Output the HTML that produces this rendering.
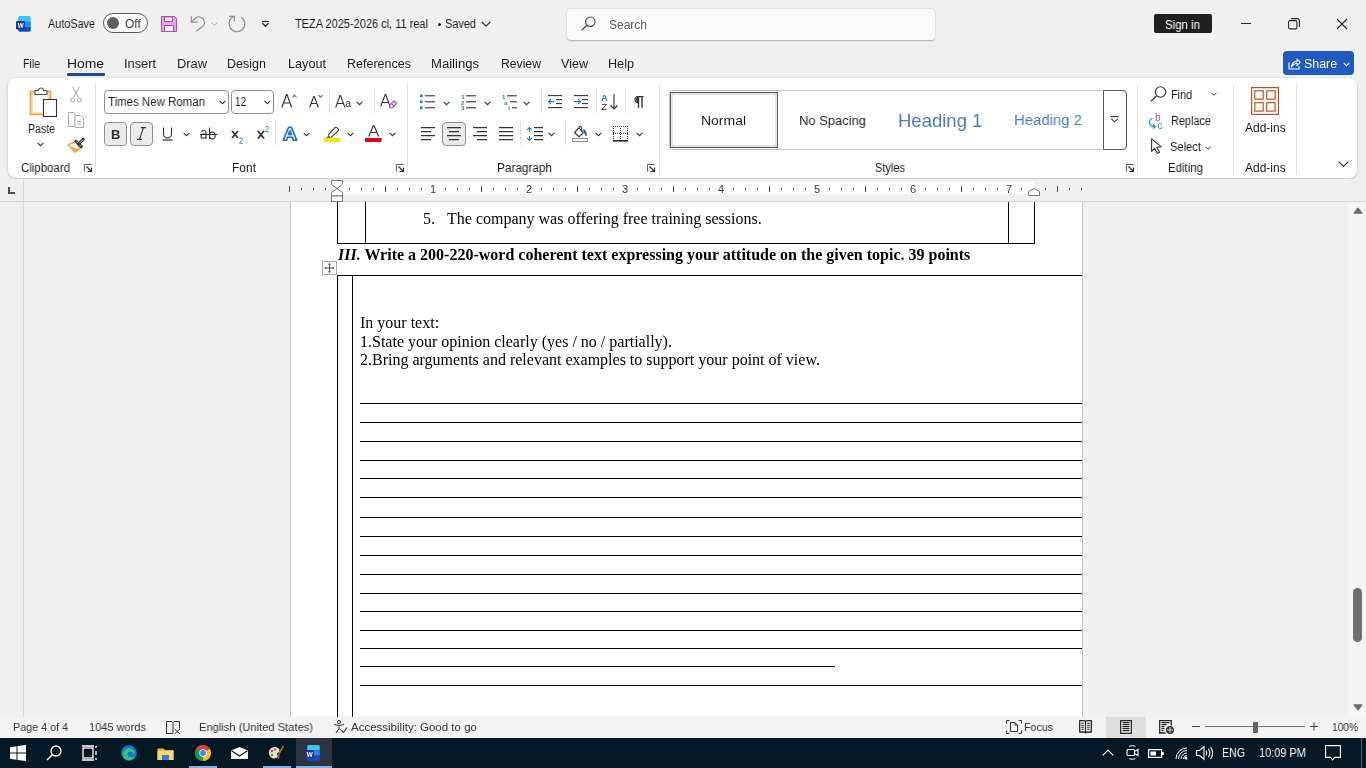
<!DOCTYPE html>
<html><head><meta charset="utf-8">
<style>
*{margin:0;padding:0;box-sizing:border-box}
html,body{width:1366px;height:768px;overflow:hidden;background:#f0f0f0;font-family:"Liberation Sans",sans-serif;color:#262626;position:relative}
.a{position:absolute;white-space:nowrap}
svg.a{overflow:visible}
body>div.a{will-change:transform}
</style></head><body>
<svg class="a" style="left:16px;top:16px" width="16" height="16" viewBox="0 0 16 16" fill="none"><defs><clipPath id="wc"><rect x="2.2" y="0.1" width="12.6" height="15.6" rx="1.6"/></clipPath></defs><g clip-path="url(#wc)"><rect x="2" y="0" width="13" height="5.3" fill="#39c6f3"/><rect x="2" y="5.3" width="13" height="5.3" fill="#1c8fe0"/><rect x="2" y="10.6" width="13" height="5.4" fill="#1251c6"/></g><rect x="0" y="5" width="8.9" height="8.6" rx="1.3" fill="#1c37a3"/><path d="M1.6 7l1.3 5h0.9l0.9-3.3 0.9 3.3h0.9L7.8 7H6.8L6.1 10.3 5.2 7h-0.8L3.5 10.3 2.8 7z" fill="#fff"/></svg>
<div class="a" style="left:48.00px;top:17.94px;font-size:12px;line-height:13.8px;font-family:'Liberation Sans',sans-serif;font-weight:400;color:#1a1a1a;transform:scaleX(0.9038);transform-origin:0 0;">AutoSave</div>
<div class="a" style="left:103px;top:13px;width:45px;height:20px;border:1px solid #5a5a5a;border-radius:10px;background:#fff"></div>
<div class="a" style="left:107px;top:17px;width:12px;height:12px;border-radius:50%;background:#5f5f5f"></div>
<div class="a" style="left:125.00px;top:17.94px;font-size:12px;line-height:13.8px;font-family:'Liberation Sans',sans-serif;font-weight:400;color:#404040;">Off</div>
<svg class="a" style="left:161px;top:16px" width="16" height="16" viewBox="0 0 16 16" fill="none"><path d="M0.5 0.5h13l2 2v13h-15z" fill="#e8a6e6" stroke="#b146c2"/><rect x="3.5" y="1" width="8" height="4.5" fill="#fff" stroke="#b146c2"/><rect x="3.5" y="9.5" width="9" height="6" fill="#fff" stroke="#b146c2"/></svg>
<svg class="a" style="left:188px;top:14px" width="20" height="20" viewBox="0 0 20 20" fill="none"><path d="M3.3 2.3V8.2H9.8" stroke="#8f8f8f" stroke-width="1.2"/><path d="M3.6 7.9L7 4.5A5.5 5.5 0 0 1 14.8 12.3L8.2 17.4" stroke="#8f8f8f" stroke-width="1.2"/></svg>
<svg class="a" style="left:211px;top:22px" width="7" height="4" viewBox="0 0 7 4" fill="none"><path d="M0.5 0.6l2.9 2.7 2.9-2.7" stroke="#a0a0a0" stroke-width="0.9"/></svg>
<svg class="a" style="left:226px;top:13px" width="20" height="22" viewBox="0 0 20 22" fill="none"><path d="M15.3 4.2A7.9 7.9 0 1 1 8.4 3.3" stroke="#8f8f8f" stroke-width="1.2"/><path d="M3.1 3.3H8.4V8.5" stroke="#8f8f8f" stroke-width="1.2"/></svg>
<svg class="a" style="left:261px;top:20px" width="9" height="8" viewBox="0 0 9 8" fill="none"><path d="M1 1.5h7" stroke="#262626" stroke-width="1.2"/><path d="M1.5 3.3l3 3 3-3" stroke="#262626" stroke-width="1.3"/></svg>
<div class="a" style="left:295.00px;top:17.94px;font-size:12px;line-height:13.8px;font-family:'Liberation Sans',sans-serif;font-weight:400;color:#1a1a1a;transform:scaleX(0.9160);transform-origin:0 0;">TEZA 2025-2026 cl, 11 real</div>
<div class="a" style="left:438px;top:23px;width:3px;height:3px;border-radius:50%;background:#262626"></div>
<div class="a" style="left:445.00px;top:17.94px;font-size:12px;line-height:13.8px;font-family:'Liberation Sans',sans-serif;font-weight:400;color:#1a1a1a;transform:scaleX(0.9118);transform-origin:0 0;">Saved</div>
<svg class="a" style="left:481px;top:21px" width="10" height="7" viewBox="0 0 10 7" fill="none"><path d="M0.7 0.9l4.3 4.3 4.3-4.3" stroke="#262626" stroke-width="1.2"/></svg>
<div class="a" style="left:567px;top:9px;width:368px;height:31px;background:#fafafa;border-radius:4px;box-shadow:0 0.5px 1.5px rgba(0,0,0,.28)"></div>
<svg class="a" style="left:581px;top:16px" width="15" height="15" viewBox="0 0 15 15" fill="none"><circle cx="9.3" cy="5.7" r="4.7" stroke="#444" stroke-width="1.2"/><path d="M6 9L0.8 14.2" stroke="#444" stroke-width="1.3"/></svg>
<div class="a" style="left:609.00px;top:18.64px;font-size:12px;line-height:13.8px;font-family:'Liberation Sans',sans-serif;font-weight:400;color:#5c5c5c;">Search</div>
<div class="a" style="left:1154px;top:14px;width:58px;height:19px;background:#202020;border-radius:2px"></div>
<div class="a" style="left:1165.00px;top:18.94px;font-size:12px;line-height:13.8px;font-family:'Liberation Sans',sans-serif;font-weight:400;color:#fff;transform:scaleX(0.9537);transform-origin:0 0;">Sign in</div>
<div class="a" style="left:1241px;top:23px;width:10px;height:1px;background:#262626"></div>
<svg class="a" style="left:1288px;top:18px" width="12" height="12" viewBox="0 0 12 12" fill="none"><rect x="0.6" y="2.6" width="8.3" height="8.3" rx="1.5" stroke="#262626" stroke-width="1.1"/><path d="M3 0.6h6.2a2.2 2.2 0 0 1 2.2 2.2V9" stroke="#262626" stroke-width="1.1"/></svg>
<svg class="a" style="left:1336px;top:18px" width="12" height="12" viewBox="0 0 12 12" fill="none"><path d="M1 1l10 10M11 1L1 11" stroke="#262626" stroke-width="1.1"/></svg>
<div class="a" style="left:23.00px;top:57.94px;font-size:12px;line-height:13.8px;font-family:'Liberation Sans',sans-serif;font-weight:400;color:#1f1f1f;transform:scaleX(0.8808);transform-origin:0 0;">File</div>
<div class="a" style="left:67.00px;top:57.94px;font-size:12px;line-height:13.8px;font-family:'Liberation Sans',sans-serif;font-weight:400;color:#1a1a1a;transform:scaleX(1.1562);transform-origin:0 0;">Home</div>
<div class="a" style="left:124.00px;top:57.94px;font-size:12px;line-height:13.8px;font-family:'Liberation Sans',sans-serif;font-weight:400;color:#1f1f1f;transform:scaleX(1.0667);transform-origin:0 0;">Insert</div>
<div class="a" style="left:177.00px;top:57.94px;font-size:12px;line-height:13.8px;font-family:'Liberation Sans',sans-serif;font-weight:400;color:#1f1f1f;transform:scaleX(1.0714);transform-origin:0 0;">Draw</div>
<div class="a" style="left:227.00px;top:57.94px;font-size:12px;line-height:13.8px;font-family:'Liberation Sans',sans-serif;font-weight:400;color:#1f1f1f;transform:scaleX(1.0428);transform-origin:0 0;">Design</div>
<div class="a" style="left:288.00px;top:57.94px;font-size:12px;line-height:13.8px;font-family:'Liberation Sans',sans-serif;font-weight:400;color:#1f1f1f;transform:scaleX(1.0556);transform-origin:0 0;">Layout</div>
<div class="a" style="left:347.00px;top:57.94px;font-size:12px;line-height:13.8px;font-family:'Liberation Sans',sans-serif;font-weight:400;color:#1f1f1f;transform:scaleX(1.0423);transform-origin:0 0;">References</div>
<div class="a" style="left:431.00px;top:57.94px;font-size:12px;line-height:13.8px;font-family:'Liberation Sans',sans-serif;font-weight:400;color:#1f1f1f;transform:scaleX(1.0909);transform-origin:0 0;">Mailings</div>
<div class="a" style="left:501.00px;top:57.94px;font-size:12px;line-height:13.8px;font-family:'Liberation Sans',sans-serif;font-weight:400;color:#1f1f1f;transform:scaleX(1.0152);transform-origin:0 0;">Review</div>
<div class="a" style="left:561.00px;top:57.94px;font-size:12px;line-height:13.8px;font-family:'Liberation Sans',sans-serif;font-weight:400;color:#1f1f1f;transform:scaleX(1.0465);transform-origin:0 0;">View</div>
<div class="a" style="left:608.00px;top:57.94px;font-size:12px;line-height:13.8px;font-family:'Liberation Sans',sans-serif;font-weight:400;color:#1f1f1f;transform:scaleX(1.0526);transform-origin:0 0;">Help</div>
<div class="a" style="left:67px;top:73px;width:38px;height:2.5px;background:#1e4b8f;border-radius:1px"></div>
<div class="a" style="left:1283px;top:51px;width:71px;height:24px;background:#1f5bc3;border-radius:4px"></div>
<svg class="a" style="left:1288px;top:57px" width="13" height="13" viewBox="0 0 13 13" fill="none"><path d="M1 5.5v6.5h10V9" stroke="#fff" stroke-width="1.1"/><path d="M3.5 10C4 6 6.5 4.5 9 4.5V2l3.2 3.3L9 8.6V6.2C6.8 6.2 5 7.5 3.5 10z" stroke="#fff" stroke-width="1.1" stroke-linejoin="round"/></svg>
<div class="a" style="left:1304.00px;top:57.94px;font-size:12px;line-height:13.8px;font-family:'Liberation Sans',sans-serif;font-weight:400;color:#fff;transform:scaleX(1.0312);transform-origin:0 0;">Share</div>
<svg class="a" style="left:1343px;top:62px" width="7" height="5" viewBox="0 0 7 5" fill="none"><path d="M0.7 0.8L3.5 3.6 6.3 0.8" stroke="#fff" stroke-width="1.1"/></svg>
<div class="a" style="left:8px;top:78px;width:1349px;height:100px;background:#fff;border-radius:8px;box-shadow:0 1px 3px rgba(0,0,0,.2),0 0 1px rgba(0,0,0,.1)"></div>
<div class="a" style="left:95px;top:84px;width:1px;height:90px;background:#e0e0e0"></div>
<div class="a" style="left:407px;top:84px;width:1px;height:90px;background:#e0e0e0"></div>
<div class="a" style="left:659px;top:84px;width:1px;height:90px;background:#e0e0e0"></div>
<div class="a" style="left:1137px;top:84px;width:1px;height:90px;background:#e0e0e0"></div>
<div class="a" style="left:1233px;top:84px;width:1px;height:90px;background:#e0e0e0"></div>
<div class="a" style="left:1296px;top:84px;width:1px;height:90px;background:#e0e0e0"></div>
<div class="a" style="left:21.00px;top:162.44px;font-size:12px;line-height:13.8px;font-family:'Liberation Sans',sans-serif;font-weight:400;color:#262626;transform:scaleX(0.9533);transform-origin:0 0;">Clipboard</div>
<div class="a" style="left:232.00px;top:162.44px;font-size:12px;line-height:13.8px;font-family:'Liberation Sans',sans-serif;font-weight:400;color:#1a1a1a;">Font</div>
<div class="a" style="left:497.00px;top:162.44px;font-size:12px;line-height:13.8px;font-family:'Liberation Sans',sans-serif;font-weight:400;color:#1a1a1a;transform:scaleX(0.9821);transform-origin:0 0;">Paragraph</div>
<div class="a" style="left:875.00px;top:162.44px;font-size:12px;line-height:13.8px;font-family:'Liberation Sans',sans-serif;font-weight:400;color:#1a1a1a;transform:scaleX(0.9174);transform-origin:0 0;">Styles</div>
<div class="a" style="left:1168.00px;top:162.44px;font-size:12px;line-height:13.8px;font-family:'Liberation Sans',sans-serif;font-weight:400;color:#1a1a1a;transform:scaleX(0.9537);transform-origin:0 0;">Editing</div>
<div class="a" style="left:1245.00px;top:162.44px;font-size:12px;line-height:13.8px;font-family:'Liberation Sans',sans-serif;font-weight:400;color:#1a1a1a;">Add-ins</div>
<svg class="a" style="left:84px;top:164px" width="9" height="9" viewBox="0 0 9 9" fill="none"><path d="M0.5 0.5h7M0.5 0.5v7" stroke="#5a5a5a" stroke-width="1"/><path d="M2.5 2.5l5 5M7.5 3.5v4h-4" stroke="#262626" stroke-width="1.1"/></svg>
<svg class="a" style="left:396px;top:164px" width="9" height="9" viewBox="0 0 9 9" fill="none"><path d="M0.5 0.5h7M0.5 0.5v7" stroke="#5a5a5a" stroke-width="1"/><path d="M2.5 2.5l5 5M7.5 3.5v4h-4" stroke="#262626" stroke-width="1.1"/></svg>
<svg class="a" style="left:647px;top:164px" width="9" height="9" viewBox="0 0 9 9" fill="none"><path d="M0.5 0.5h7M0.5 0.5v7" stroke="#5a5a5a" stroke-width="1"/><path d="M2.5 2.5l5 5M7.5 3.5v4h-4" stroke="#262626" stroke-width="1.1"/></svg>
<svg class="a" style="left:1126px;top:164px" width="9" height="9" viewBox="0 0 9 9" fill="none"><path d="M0.5 0.5h7M0.5 0.5v7" stroke="#5a5a5a" stroke-width="1"/><path d="M2.5 2.5l5 5M7.5 3.5v4h-4" stroke="#262626" stroke-width="1.1"/></svg>
<svg class="a" style="left:1338px;top:161px" width="11" height="7" viewBox="0 0 11 7" fill="none"><path d="M0.7 0.7l4.8 4.8 4.8-4.8" stroke="#333" stroke-width="1.2"/></svg>
<svg class="a" style="left:29px;top:86px" width="29" height="32" viewBox="0 0 29 32" fill="none"><path d="M1.5 5.5h4v19h8v-19h-8" fill="none"/><rect x="1.5" y="5.5" width="20" height="23" fill="#fce3b0" stroke="#e8a33a" stroke-width="1.6"/><rect x="4" y="8" width="15" height="18" fill="#fff"/><path d="M6 4.5h3.5a2.5 2.5 0 0 1 5 0H18v4H6z" fill="#fff" stroke="#555" stroke-width="1.1"/><rect x="14.5" y="13.5" width="13" height="17" fill="#fff" stroke="#333" stroke-width="1.1"/></svg>
<div class="a" style="left:28.00px;top:122.94px;font-size:12px;line-height:13.8px;font-family:'Liberation Sans',sans-serif;font-weight:400;color:#1a1a1a;transform:scaleX(0.8795);transform-origin:0 0;">Paste</div>
<svg class="a" style="left:37px;top:142px" width="7" height="5" viewBox="0 0 7 5" fill="none"><path d="M0.6 0.8L3.5 3.7 6.4 0.8" stroke="#333" stroke-width="1.1"/></svg>
<svg class="a" style="left:70px;top:86px" width="12" height="17" viewBox="0 0 12 17" fill="none"><path d="M2.5 0.5l6 11M9.5 0.5l-6 11" stroke="#a8a8a8" stroke-width="1"/><circle cx="2.6" cy="14" r="2" stroke="#a8a8a8"/><circle cx="9.4" cy="14" r="2" stroke="#a8a8a8"/></svg>
<svg class="a" style="left:68px;top:112px" width="17" height="17" viewBox="0 0 17 17" fill="none"><path d="M0.5 0.5h5l1.5 1.5v12.5h-6.5z" fill="#fff" stroke="#a8a8a8"/><path d="M7 3.5h5.5l3 3v9h-8.5z" fill="#fff" stroke="#a8a8a8"/><path d="M9 9.5h4.5M9 12h4.5" stroke="#a8a8a8"/></svg>
<svg class="a" style="left:66px;top:136px" width="20" height="18" viewBox="0 0 20 18" fill="none"><path d="M2.3 8.8L9.6 5.2 14 12.3 9.1 16.3z" fill="#fff3dc" stroke="#e8942a" stroke-width="1.1" stroke-linejoin="round"/><path d="M3.5 10.3L12.6 13.2 9.1 16.3z" fill="#f6ad45"/><path d="M9.9 5.2l5.4 5.4" stroke="#333" stroke-width="3" stroke-linecap="round"/><path d="M10.4 5.7l4.4 4.4" stroke="#e8eef3" stroke-width="1"/><path d="M13 7.6l4.3-4.3" stroke="#333" stroke-width="3" stroke-linecap="round"/><path d="M13.5 7.1l3.3-3.3" stroke="#e8eef3" stroke-width="1"/></svg>
<div class="a" style="left:104px;top:90px;width:125px;height:24px;border:1px solid #8f8f8f;border-radius:4px;background:#fff"></div>
<div class="a" style="left:108.00px;top:96.44px;font-size:12px;line-height:13.8px;font-family:'Liberation Sans',sans-serif;font-weight:400;color:#1f1f1f;transform:scaleX(0.9547);transform-origin:0 0;">Times New Roman</div>
<svg class="a" style="left:219px;top:100px" width="7" height="5" viewBox="0 0 7 5" fill="none"><path d="M0.6 0.8L3.5 3.7 6.4 0.8" stroke="#333" stroke-width="1.1"/></svg>
<div class="a" style="left:231px;top:90px;width:43px;height:24px;border:1px solid #8f8f8f;border-radius:4px;background:#fff"></div>
<div class="a" style="left:235.00px;top:96.44px;font-size:12px;line-height:13.8px;font-family:'Liberation Sans',sans-serif;font-weight:400;color:#1f1f1f;transform:scaleX(0.8271);transform-origin:0 0;">12</div>
<svg class="a" style="left:264px;top:100px" width="7" height="5" viewBox="0 0 7 5" fill="none"><path d="M0.6 0.8L3.5 3.7 6.4 0.8" stroke="#333" stroke-width="1.1"/></svg>
<svg class="a" style="left:281px;top:93px" width="16" height="15" viewBox="0 0 16 15" fill="none"><path d="M0.8 14.5L5.5 1.5h0.5L10.7 14.5M2.5 10h7" stroke="#333" stroke-width="1.2"/><path d="M11.5 4.5l2-2.3 2 2.3" stroke="#1f7ac5" stroke-width="1.1"/></svg>
<svg class="a" style="left:309px;top:94px" width="14" height="14" viewBox="0 0 14 14" fill="none"><path d="M0.7 13.5L4.7 2.5h0.6L9.3 13.5M2.2 9.5h6" stroke="#333" stroke-width="1.1"/><path d="M9.5 1.2l2 2.2 2-2.2" stroke="#1f7ac5" stroke-width="1.1"/></svg>
<div class="a" style="left:329px;top:90px;width:1px;height:23px;background:#e0e0e0"></div>
<svg class="a" style="left:335px;top:94px" width="17" height="14" viewBox="0 0 17 14" fill="none"><path d="M0.7 13.5L5 1.5h0.6L9.9 13.5M2.3 9.5h6" stroke="#333" stroke-width="1.1"/><text x="10.3" y="13.4" font-size="10.5" fill="#333" font-family="Liberation Sans">a</text></svg>
<svg class="a" style="left:356px;top:101px" width="7" height="5" viewBox="0 0 7 5" fill="none"><path d="M0.6 0.8L3.5 3.7 6.4 0.8" stroke="#333" stroke-width="1.1"/></svg>
<div class="a" style="left:374px;top:90px;width:1px;height:23px;background:#e0e0e0"></div>
<svg class="a" style="left:380px;top:93px" width="17" height="15" viewBox="0 0 17 15" fill="none"><path d="M0.7 13.5L5.2 1.5h0.6L10 13.5M2.2 9.5h6.5" stroke="#333" stroke-width="1.1"/><path d="M9.5 12.5l4.5-4.5 2.5 2.5-4.5 4.5h-2z" stroke="#a84bc8" stroke-width="1.2" stroke-linejoin="round"/><path d="M11.5 10.5l2.5 2.5" stroke="#a84bc8" stroke-width="1"/></svg>
<div class="a" style="left:104px;top:122px;width:23px;height:24px;border:1px solid #8f8f8f;border-radius:4px;background:#ebebeb"></div>
<div class="a" style="left:111.00px;top:128.02px;font-size:13px;line-height:14.95px;font-family:'Liberation Sans',sans-serif;font-weight:700;color:#333;transform:scaleX(0.9574);transform-origin:0 0;">B</div>
<div class="a" style="left:130px;top:122px;width:23px;height:24px;border:1px solid #8f8f8f;border-radius:4px;background:#ebebeb"></div>
<svg class="a" style="left:136px;top:127px" width="11" height="13" viewBox="0 0 11 13" fill="none"><path d="M5 0.6h5M1 12.4h5M7.5 0.6L3.5 12.4" stroke="#333" stroke-width="1.1"/></svg>
<svg class="a" style="left:162px;top:127px" width="11" height="14" viewBox="0 0 11 14" fill="none"><path d="M1.5 0.5v6.5a4 4 0 0 0 8 0V0.5" stroke="#333" stroke-width="1.1"/><path d="M0.5 13h10" stroke="#333" stroke-width="1.2"/></svg>
<svg class="a" style="left:183px;top:132px" width="7" height="5" viewBox="0 0 7 5" fill="none"><path d="M0.6 0.8L3.5 3.7 6.4 0.8" stroke="#333" stroke-width="1.1"/></svg>
<svg class="a" style="left:200px;top:127px" width="18" height="13" viewBox="0 0 18 13" fill="none"><path d="M1.5 4.5c1-1.5 4.5-1.5 4.5 1v6M6 8c-1-1.5-5-1.5-5 1.2 0 2.8 4 2.5 5 0.8" stroke="#333" stroke-width="1.1"/><path d="M9.5 0.5v11.5M9.7 7c0.8-2.8 5.5-2.8 5.5 1.5s-4.7 4.3-5.5 1.5" stroke="#333" stroke-width="1.1"/><path d="M0 7.5h17.5" stroke="#333" stroke-width="1.1"/></svg>
<svg class="a" style="left:231px;top:130px" width="13" height="14" viewBox="0 0 13 14" fill="none"><path d="M1 1l6 7M7 1L1 8" stroke="#333" stroke-width="1.8"/><path d="M8.5 9c0.5-1.5 3-1.5 3 0.3 0 1.2-3 2.5-3 4h3.2" stroke="#1f7ac5" stroke-width="0.9"/></svg>
<svg class="a" style="left:257px;top:126px" width="13" height="14" viewBox="0 0 13 14" fill="none"><path d="M1 5l6 7.5M7 5L1 12.5" stroke="#333" stroke-width="1.8"/><path d="M8.5 1.5c0.5-1.5 3-1.5 3 0.3 0 1.2-3 2.5-3 4h3.2" stroke="#1f7ac5" stroke-width="0.9"/></svg>
<div class="a" style="left:275px;top:122px;width:1px;height:23px;background:#e0e0e0"></div>
<svg class="a" style="left:282px;top:126px" width="16" height="16" viewBox="0 0 16 16" fill="none"><path d="M1.2 14.2L6.6 1.2h2.8l5.4 13h-3.4l-1.1-2.9H5.7l-1.1 2.9z M6.7 8.4h2.6L8 4.9z" fill="#cfe6f8" stroke="#1f6fc0" stroke-width="1.6" stroke-linejoin="round"/></svg>
<svg class="a" style="left:303px;top:132px" width="7" height="5" viewBox="0 0 7 5" fill="none"><path d="M0.6 0.8L3.5 3.7 6.4 0.8" stroke="#333" stroke-width="1.1"/></svg>
<svg class="a" style="left:323px;top:124px" width="18" height="19" viewBox="0 0 18 19" fill="none"><path d="M5.2 11l6.7-7.3a1.4 1.4 0 0 1 2 0l1.2 1.2a1.4 1.4 0 0 1 0 2L7.8 13.6" fill="#fff" stroke="#444" stroke-width="1.2" stroke-linejoin="round"/><path d="M5.2 11l2.6 2.6-1.6 0.3-1.3-1.2z" fill="#555"/><path d="M4.9 12.5l-2.3 1.5h3.5z" fill="#666"/><rect x="0.7" y="14" width="16.5" height="4" fill="#f5e900"/></svg>
<svg class="a" style="left:347px;top:132px" width="7" height="5" viewBox="0 0 7 5" fill="none"><path d="M0.6 0.8L3.5 3.7 6.4 0.8" stroke="#333" stroke-width="1.1"/></svg>
<svg class="a" style="left:365px;top:124px" width="17" height="19" viewBox="0 0 17 19" fill="none"><path d="M3.8 12.5L8.3 1.8h0.8l4.5 10.7M5.5 8.5h6.3" stroke="#333" stroke-width="1.2"/><rect x="0" y="14" width="16.5" height="4" fill="#e3001b"/></svg>
<svg class="a" style="left:389px;top:132px" width="7" height="5" viewBox="0 0 7 5" fill="none"><path d="M0.6 0.8L3.5 3.7 6.4 0.8" stroke="#333" stroke-width="1.1"/></svg>
<svg class="a" style="left:420px;top:94px" width="16" height="15" viewBox="0 0 16 15" fill="none"><rect x="0" y="0.5" width="2.6" height="2.6" fill="#1f7ac5"/><rect x="0" y="6.5" width="2.6" height="2.6" fill="#1f7ac5"/><rect x="0" y="12.5" width="2.6" height="2.6" fill="#1f7ac5"/><path d="M5 1.8h10" stroke="#333" stroke-width="1.1"/><path d="M5 7.8h10" stroke="#333" stroke-width="1.1"/><path d="M5 13.8h10" stroke="#333" stroke-width="1.1"/></svg>
<svg class="a" style="left:443px;top:101px" width="7" height="5" viewBox="0 0 7 5" fill="none"><path d="M0.6 0.8L3.5 3.7 6.4 0.8" stroke="#333" stroke-width="1.1"/></svg>
<svg class="a" style="left:461px;top:94px" width="16" height="16" viewBox="0 0 16 16" fill="none"><text x="0.3" y="5.2" font-size="6.2" font-weight="700" fill="#1f7ac5" font-family="Liberation Sans">1</text><text x="0" y="10.6" font-size="6.2" font-weight="700" fill="#1f7ac5" font-family="Liberation Sans">2</text><text x="0" y="16" font-size="6.2" font-weight="700" fill="#1f7ac5" font-family="Liberation Sans">3</text><path d="M5 1.8h10" stroke="#333" stroke-width="1.1"/><path d="M5 7.8h10" stroke="#333" stroke-width="1.1"/><path d="M5 13.8h10" stroke="#333" stroke-width="1.1"/></svg>
<svg class="a" style="left:484px;top:101px" width="7" height="5" viewBox="0 0 7 5" fill="none"><path d="M0.6 0.8L3.5 3.7 6.4 0.8" stroke="#333" stroke-width="1.1"/></svg>
<svg class="a" style="left:502px;top:94px" width="16" height="16" viewBox="0 0 16 16" fill="none"><text x="0" y="5.2" font-size="6.2" font-weight="700" fill="#1f7ac5" font-family="Liberation Sans">1</text><text x="2.2" y="10.6" font-size="6.2" font-weight="700" fill="#1f7ac5" font-family="Liberation Sans">a</text><text x="6.3" y="16" font-size="6.2" font-weight="700" fill="#1f7ac5" font-family="Liberation Sans">i</text><path d="M5 1.8h10" stroke="#333" stroke-width="1.1"/><path d="M8 7.8h7" stroke="#333" stroke-width="1.1"/><path d="M10 13.8h5" stroke="#333" stroke-width="1.1"/></svg>
<svg class="a" style="left:523px;top:101px" width="7" height="5" viewBox="0 0 7 5" fill="none"><path d="M0.6 0.8L3.5 3.7 6.4 0.8" stroke="#333" stroke-width="1.1"/></svg>
<div class="a" style="left:541px;top:90px;width:1px;height:23px;background:#e0e0e0"></div>
<svg class="a" style="left:548px;top:95px" width="15" height="14" viewBox="0 0 15 14" fill="none"><path d="M0 0.6h14" stroke="#333" stroke-width="1.1"/><path d="M0 12.6h14" stroke="#333" stroke-width="1.1"/><path d="M8 4.6h6" stroke="#333" stroke-width="1.1"/><path d="M8 8.6h6" stroke="#333" stroke-width="1.1"/><path d="M0.5 6.6h6M3 4l-2.5 2.6L3 9.2" stroke="#1f7ac5" stroke-width="1.1"/></svg>
<svg class="a" style="left:574px;top:95px" width="15" height="14" viewBox="0 0 15 14" fill="none"><path d="M0 0.6h14" stroke="#333" stroke-width="1.1"/><path d="M0 12.6h14" stroke="#333" stroke-width="1.1"/><path d="M8 4.6h6" stroke="#333" stroke-width="1.1"/><path d="M8 8.6h6" stroke="#333" stroke-width="1.1"/><path d="M0 6.6h6.5M4 4l2.5 2.6L4 9.2" stroke="#1f7ac5" stroke-width="1.1"/></svg>
<div class="a" style="left:596px;top:90px;width:1px;height:23px;background:#e0e0e0"></div>
<svg class="a" style="left:601px;top:93px" width="18" height="17" viewBox="0 0 18 17" fill="none"><text x="0" y="7.8" font-size="9.5" font-weight="700" fill="#1f7ac5" font-family="Liberation Sans">A</text><text x="0.3" y="16.7" font-size="9.5" fill="#333" font-family="Liberation Sans">Z</text><path d="M13 1v15M9.5 12.5l3.5 3.5 3.5-3.5" stroke="#333" stroke-width="1.1"/></svg>
<div class="a" style="left:625px;top:90px;width:1px;height:23px;background:#e0e0e0"></div>
<svg class="a" style="left:634px;top:96px" width="10" height="12" viewBox="0 0 10 12" fill="none"><path d="M4 6.5C0 6.5 0 0.7 4 0.7h5.5" stroke="#333" stroke-width="1.3"/><path d="M4.5 0.7v11M8 0.7v11" stroke="#333" stroke-width="1.4"/><path d="M4.5 1v5.5C1.5 6.5 1 1 4.5 1z" fill="#333"/></svg>
<svg class="a" style="left:421px;top:127px" width="15" height="14" viewBox="0 0 15 14" fill="none"><path d="M0 0.6h14M0 4.6h10M0 8.6h14M0 12.6h10" stroke="#333" stroke-width="1.1"/></svg>
<div class="a" style="left:442px;top:122px;width:24px;height:24px;border:1px solid #8f8f8f;border-radius:4px;background:#ebebeb"></div>
<svg class="a" style="left:447px;top:127px" width="15" height="14" viewBox="0 0 15 14" fill="none"><path d="M0 0.6h14M2 4.6h10M0 8.6h14M2 12.6h10" stroke="#333" stroke-width="1.1"/></svg>
<svg class="a" style="left:473px;top:127px" width="15" height="14" viewBox="0 0 15 14" fill="none"><path d="M0 0.6h14M4 4.6h10M0 8.6h14M4 12.6h10" stroke="#333" stroke-width="1.1"/></svg>
<svg class="a" style="left:499px;top:127px" width="15" height="14" viewBox="0 0 15 14" fill="none"><path d="M0 0.6h14M0 4.6h14M0 8.6h14M0 12.6h14" stroke="#333" stroke-width="1.1"/></svg>
<div class="a" style="left:520px;top:122px;width:1px;height:23px;background:#e0e0e0"></div>
<svg class="a" style="left:526px;top:126px" width="18" height="16" viewBox="0 0 18 16" fill="none"><path d="M3.5 1.5v4.5M1.2 3.8l2.3-2.3 2.3 2.3M3.5 10v4.5M1.2 12.2l2.3 2.3 2.3-2.3" stroke="#1f7ac5" stroke-width="1.1"/><path d="M8 1.6h9M8 5.6h9M8 9.6h9M8 13.6h9" stroke="#333" stroke-width="1.1"/></svg>
<svg class="a" style="left:548px;top:132px" width="7" height="5" viewBox="0 0 7 5" fill="none"><path d="M0.6 0.8L3.5 3.7 6.4 0.8" stroke="#333" stroke-width="1.1"/></svg>
<div class="a" style="left:565px;top:122px;width:1px;height:23px;background:#e0e0e0"></div>
<svg class="a" style="left:571px;top:125px" width="18" height="18" viewBox="0 0 18 18" fill="none"><path d="M3.5 7.5L8 3l4.3 4.9L8 11.75z" fill="#fff" stroke="#333" stroke-width="1.1" stroke-linejoin="round"/><path d="M8 3.5c0-3 2.4-3 2.4 0v3.2" stroke="#333" stroke-width="1.1"/><path d="M12.6 4.5c2 0.5 3 3 2.7 6.4-1-1-1.8-3-2.5-4.3z" fill="#1f5fa8" stroke="#1f5fa8" stroke-width="0.8"/><rect x="1.5" y="13.5" width="15" height="3" fill="#fff" stroke="#8a8a8a" stroke-width="1"/></svg>
<svg class="a" style="left:595px;top:132px" width="7" height="5" viewBox="0 0 7 5" fill="none"><path d="M0.6 0.8L3.5 3.7 6.4 0.8" stroke="#333" stroke-width="1.1"/></svg>
<svg class="a" style="left:613px;top:126px" width="16" height="16" viewBox="0 0 16 16" fill="none"><rect x="0" y="0" width="1" height="1" fill="#333"/><rect x="0" y="7" width="1" height="1" fill="#333"/><rect x="0" y="14" width="1" height="1" fill="#333"/><rect x="2" y="0" width="1" height="1" fill="#333"/><rect x="2" y="7" width="1" height="1" fill="#333"/><rect x="2" y="14" width="1" height="1" fill="#333"/><rect x="4" y="0" width="1" height="1" fill="#333"/><rect x="4" y="7" width="1" height="1" fill="#333"/><rect x="4" y="14" width="1" height="1" fill="#333"/><rect x="6" y="0" width="1" height="1" fill="#333"/><rect x="6" y="7" width="1" height="1" fill="#333"/><rect x="6" y="14" width="1" height="1" fill="#333"/><rect x="8" y="0" width="1" height="1" fill="#333"/><rect x="8" y="7" width="1" height="1" fill="#333"/><rect x="8" y="14" width="1" height="1" fill="#333"/><rect x="10" y="0" width="1" height="1" fill="#333"/><rect x="10" y="7" width="1" height="1" fill="#333"/><rect x="10" y="14" width="1" height="1" fill="#333"/><rect x="12" y="0" width="1" height="1" fill="#333"/><rect x="12" y="7" width="1" height="1" fill="#333"/><rect x="12" y="14" width="1" height="1" fill="#333"/><rect x="14" y="0" width="1" height="1" fill="#333"/><rect x="14" y="7" width="1" height="1" fill="#333"/><rect x="14" y="14" width="1" height="1" fill="#333"/><rect x="0" y="2" width="1" height="1" fill="#333"/><rect x="0" y="4" width="1" height="1" fill="#333"/><rect x="0" y="6" width="1" height="1" fill="#333"/><rect x="0" y="8" width="1" height="1" fill="#333"/><rect x="0" y="10" width="1" height="1" fill="#333"/><rect x="0" y="12" width="1" height="1" fill="#333"/><rect x="7" y="2" width="1" height="1" fill="#333"/><rect x="7" y="4" width="1" height="1" fill="#333"/><rect x="7" y="6" width="1" height="1" fill="#333"/><rect x="7" y="8" width="1" height="1" fill="#333"/><rect x="7" y="10" width="1" height="1" fill="#333"/><rect x="7" y="12" width="1" height="1" fill="#333"/><rect x="14" y="2" width="1" height="1" fill="#333"/><rect x="14" y="4" width="1" height="1" fill="#333"/><rect x="14" y="6" width="1" height="1" fill="#333"/><rect x="14" y="8" width="1" height="1" fill="#333"/><rect x="14" y="10" width="1" height="1" fill="#333"/><rect x="14" y="12" width="1" height="1" fill="#333"/><rect x="0" y="14" width="15" height="1.6" fill="#222"/></svg>
<svg class="a" style="left:636px;top:132px" width="7" height="5" viewBox="0 0 7 5" fill="none"><path d="M0.6 0.8L3.5 3.7 6.4 0.8" stroke="#333" stroke-width="1.1"/></svg>
<div class="a" style="left:669px;top:90px;width:458px;height:60px;border:1px solid #c6c6c6;border-radius:4px;background:#fff"></div>
<div class="a" style="left:670px;top:92px;width:108px;height:56px;border:1px solid #5c5c5c;box-shadow:inset 0 0 0 2px #e4e4e4;background:#fff"></div>
<div class="a" style="left:701.00px;top:113.06px;font-size:13.5px;line-height:15.52px;font-family:'Liberation Sans',sans-serif;font-weight:400;color:#1f1f1f;transform:scaleX(1.0345);transform-origin:0 0;">Normal</div>
<div class="a" style="left:799.00px;top:113.06px;font-size:13.5px;line-height:15.52px;font-family:'Liberation Sans',sans-serif;font-weight:400;color:#1f1f1f;transform:scaleX(0.9599);transform-origin:0 0;">No Spacing</div>
<div class="a" style="left:898.00px;top:110.45px;font-size:18.5px;line-height:21.27px;font-family:'Liberation Sans',sans-serif;font-weight:400;color:#4f7cba;">Heading 1</div>
<div class="a" style="left:1014.00px;top:110.72px;font-size:15.5px;line-height:17.82px;font-family:'Liberation Sans',sans-serif;font-weight:400;color:#4f7cba;transform:scaleX(0.9618);transform-origin:0 0;">Heading 2</div>
<div class="a" style="left:1103px;top:90px;width:24px;height:60px;border:1px solid #5c5c5c;border-radius:0 4px 4px 0;background:#fff"></div>
<svg class="a" style="left:1110px;top:116px" width="9" height="7" viewBox="0 0 9 7" fill="none"><path d="M0.5 0.6h8" stroke="#333" stroke-width="1.1"/><path d="M1.3 2.8l3.2 3 3.2-3" stroke="#333" stroke-width="1.1"/></svg>
<svg class="a" style="left:1150px;top:86px" width="17" height="16" viewBox="0 0 17 16" fill="none"><circle cx="10.5" cy="6" r="5.2" stroke="#333" stroke-width="1.1"/><path d="M6.8 9.8L0.8 15.2" stroke="#333" stroke-width="1.2"/></svg>
<div class="a" style="left:1171.00px;top:88.94px;font-size:12px;line-height:13.8px;font-family:'Liberation Sans',sans-serif;font-weight:400;color:#1a1a1a;transform:scaleX(0.9013);transform-origin:0 0;">Find</div>
<svg class="a" style="left:1211px;top:92px" width="6" height="5" viewBox="0 0 6 5" fill="none"><path d="M0.5 0.8L3 3.3 5.5 0.8" stroke="#333" stroke-width="1"/></svg>
<svg class="a" style="left:1149px;top:112px" width="16" height="17" viewBox="0 0 16 17" fill="none"><path d="M3.5 6.5C1 7 0 9 0.8 11.5c0.8 2 2.5 3 5.2 3" stroke="#1f8ad6" stroke-width="1.2"/><path d="M4 12.5l2.3 2-2.3 2" stroke="#1f8ad6" stroke-width="1.2"/><text x="6" y="8.5" font-size="10" fill="#b446c8" font-family="Liberation Sans">b</text><text x="8.6" y="16.5" font-size="10" fill="#1f8ad6" font-family="Liberation Sans">c</text></svg>
<div class="a" style="left:1171.00px;top:114.94px;font-size:12px;line-height:13.8px;font-family:'Liberation Sans',sans-serif;font-weight:400;color:#1a1a1a;transform:scaleX(0.9091);transform-origin:0 0;">Replace</div>
<svg class="a" style="left:1151px;top:138px" width="12" height="16" viewBox="0 0 12 16" fill="none"><path d="M0.6 0.8v12.5l3-3 2.8 5.2 2.2-1.2-2.8-5 4.5-0.5z" stroke="#333" stroke-width="1.1" stroke-linejoin="round"/></svg>
<div class="a" style="left:1170.00px;top:140.94px;font-size:12px;line-height:13.8px;font-family:'Liberation Sans',sans-serif;font-weight:400;color:#1a1a1a;transform:scaleX(0.9281);transform-origin:0 0;">Select</div>
<svg class="a" style="left:1205px;top:146px" width="6" height="5" viewBox="0 0 6 5" fill="none"><path d="M0.5 0.8L3 3.3 5.5 0.8" stroke="#333" stroke-width="1"/></svg>
<svg class="a" style="left:1251px;top:87px" width="28" height="28" viewBox="0 0 28 28" fill="none"><rect x="0.6" y="0.6" width="26.8" height="26.8" stroke="#c5501e" stroke-width="1.2"/><rect x="3.8" y="3.8" width="8.4" height="8.4" stroke="#c5501e" stroke-width="1.2"/><rect x="15.7" y="3.8" width="8.4" height="8.4" stroke="#c5501e" stroke-width="1.2"/><rect x="3.8" y="15.7" width="8.4" height="8.4" stroke="#c5501e" stroke-width="1.2"/><rect x="15.7" y="15.7" width="8.4" height="8.4" stroke="#c5501e" stroke-width="1.2"/></svg>
<div class="a" style="left:1245.00px;top:121.94px;font-size:12px;line-height:13.8px;font-family:'Liberation Sans',sans-serif;font-weight:400;color:#1a1a1a;">Add-ins</div>
<div class="a" style="left:0px;top:179px;width:1366px;height:22px;background:#f0f0f0"></div>
<div class="a" style="left:337px;top:182px;width:697px;height:12px;background:#fff"></div>
<div class="a" style="left:0px;top:201px;width:1366px;height:1px;background:#d4d4d4"></div>
<div class="a" style="left:23px;top:180px;width:1px;height:537px;background:#d9d9d9"></div>
<svg class="a" style="left:8px;top:187px" width="7" height="7" viewBox="0 0 7 7" fill="none"><path d="M1 0v6h6" stroke="#505050" stroke-width="2"/></svg>
<svg class="a" style="left:277px;top:181px" width="860" height="16" viewBox="0 0 860 16" fill="none"><rect x="12" y="5" width="1" height="6" fill="#505050"/><rect x="24" y="7" width="1" height="2" fill="#505050"/><rect x="36" y="7" width="1" height="2" fill="#505050"/><rect x="48" y="7" width="1" height="2" fill="#505050"/><rect x="72" y="7" width="1" height="2" fill="#505050"/><rect x="84" y="7" width="1" height="2" fill="#505050"/><rect x="96" y="7" width="1" height="2" fill="#505050"/><rect x="108" y="5" width="1" height="6" fill="#505050"/><rect x="120" y="7" width="1" height="2" fill="#505050"/><rect x="132" y="7" width="1" height="2" fill="#505050"/><rect x="144" y="7" width="1" height="2" fill="#505050"/><text x="156" y="12" font-size="11" fill="#3a3a3a" text-anchor="middle" font-family="Liberation Sans">1</text><rect x="168" y="7" width="1" height="2" fill="#505050"/><rect x="180" y="7" width="1" height="2" fill="#505050"/><rect x="192" y="7" width="1" height="2" fill="#505050"/><rect x="204" y="5" width="1" height="6" fill="#505050"/><rect x="216" y="7" width="1" height="2" fill="#505050"/><rect x="228" y="7" width="1" height="2" fill="#505050"/><rect x="240" y="7" width="1" height="2" fill="#505050"/><text x="252" y="12" font-size="11" fill="#3a3a3a" text-anchor="middle" font-family="Liberation Sans">2</text><rect x="264" y="7" width="1" height="2" fill="#505050"/><rect x="276" y="7" width="1" height="2" fill="#505050"/><rect x="288" y="7" width="1" height="2" fill="#505050"/><rect x="300" y="5" width="1" height="6" fill="#505050"/><rect x="312" y="7" width="1" height="2" fill="#505050"/><rect x="324" y="7" width="1" height="2" fill="#505050"/><rect x="336" y="7" width="1" height="2" fill="#505050"/><text x="348" y="12" font-size="11" fill="#3a3a3a" text-anchor="middle" font-family="Liberation Sans">3</text><rect x="360" y="7" width="1" height="2" fill="#505050"/><rect x="372" y="7" width="1" height="2" fill="#505050"/><rect x="384" y="7" width="1" height="2" fill="#505050"/><rect x="396" y="5" width="1" height="6" fill="#505050"/><rect x="408" y="7" width="1" height="2" fill="#505050"/><rect x="420" y="7" width="1" height="2" fill="#505050"/><rect x="432" y="7" width="1" height="2" fill="#505050"/><text x="444" y="12" font-size="11" fill="#3a3a3a" text-anchor="middle" font-family="Liberation Sans">4</text><rect x="456" y="7" width="1" height="2" fill="#505050"/><rect x="468" y="7" width="1" height="2" fill="#505050"/><rect x="480" y="7" width="1" height="2" fill="#505050"/><rect x="492" y="5" width="1" height="6" fill="#505050"/><rect x="504" y="7" width="1" height="2" fill="#505050"/><rect x="516" y="7" width="1" height="2" fill="#505050"/><rect x="528" y="7" width="1" height="2" fill="#505050"/><text x="540" y="12" font-size="11" fill="#3a3a3a" text-anchor="middle" font-family="Liberation Sans">5</text><rect x="552" y="7" width="1" height="2" fill="#505050"/><rect x="564" y="7" width="1" height="2" fill="#505050"/><rect x="576" y="7" width="1" height="2" fill="#505050"/><rect x="588" y="5" width="1" height="6" fill="#505050"/><rect x="600" y="7" width="1" height="2" fill="#505050"/><rect x="612" y="7" width="1" height="2" fill="#505050"/><rect x="624" y="7" width="1" height="2" fill="#505050"/><text x="636" y="12" font-size="11" fill="#3a3a3a" text-anchor="middle" font-family="Liberation Sans">6</text><rect x="648" y="7" width="1" height="2" fill="#505050"/><rect x="660" y="7" width="1" height="2" fill="#505050"/><rect x="672" y="7" width="1" height="2" fill="#505050"/><rect x="684" y="5" width="1" height="6" fill="#505050"/><rect x="696" y="7" width="1" height="2" fill="#505050"/><rect x="708" y="7" width="1" height="2" fill="#505050"/><rect x="720" y="7" width="1" height="2" fill="#505050"/><text x="732" y="12" font-size="11" fill="#3a3a3a" text-anchor="middle" font-family="Liberation Sans">7</text><rect x="744" y="7" width="1" height="2" fill="#505050"/><rect x="756" y="7" width="1" height="2" fill="#505050"/><rect x="768" y="7" width="1" height="2" fill="#505050"/><rect x="780" y="5" width="1" height="6" fill="#505050"/><rect x="792" y="7" width="1" height="2" fill="#505050"/><rect x="804" y="7" width="1" height="2" fill="#505050"/></svg>
<svg class="a" style="left:331px;top:180px" width="12" height="22" viewBox="0 0 12 22" fill="none"><path d="M0.5 0.5h11v4L6 8.5 0.5 4.5z" fill="#fff" stroke="#7a7a7a"/><path d="M6 8.5L11.5 12.5v3.5h-11v-3.5z" fill="#fff" stroke="#7a7a7a"/><rect x="0.5" y="16" width="11" height="5.5" fill="#fff" stroke="#7a7a7a"/></svg>
<svg class="a" style="left:1028px;top:188px" width="12" height="8" viewBox="0 0 12 8" fill="none"><path d="M0.5 7.5v-4L6 0.5l5.5 3v4z" fill="#fff" stroke="#7a7a7a"/></svg>
<div class="a" style="left:291px;top:202px;width:791px;height:515px;background:#fff"></div>
<div class="a" style="left:290px;top:202px;width:1px;height:515px;background:#c8c8c8"></div>
<div class="a" style="left:1082px;top:202px;width:1px;height:515px;background:#c8c8c8"></div>
<div class="a" style="left:337px;top:202px;width:1px;height:42px;background:#000"></div>
<div class="a" style="left:365px;top:202px;width:1px;height:42px;background:#000"></div>
<div class="a" style="left:1008px;top:202px;width:1px;height:42px;background:#000"></div>
<div class="a" style="left:1034px;top:202px;width:1px;height:42px;background:#000"></div>
<div class="a" style="left:337px;top:243px;width:698px;height:1px;background:#000"></div>
<div class="a" style="left:423.00px;top:210.40px;font-size:16px;line-height:18.4px;font-family:'Liberation Serif',serif;font-weight:400;color:#000;">5.</div>
<div class="a" style="left:447.00px;top:210.40px;font-size:16px;line-height:18.4px;font-family:'Liberation Serif',serif;font-weight:400;color:#000;">The company was offering free training sessions.</div>
<div class="a" style="left:338.00px;top:246.40px;font-size:16px;line-height:18.4px;font-family:'Liberation Serif',serif;font-weight:700;color:#000;"><i>III.</i> Write a 200-220-word coherent text expressing your attitude on the given topic. 39 points</div>
<div class="a" style="left:337px;top:275px;width:745px;height:1px;background:#000"></div>
<div class="a" style="left:337px;top:275px;width:1px;height:442px;background:#000"></div>
<div class="a" style="left:352px;top:275px;width:1px;height:442px;background:#000"></div>
<div class="a" style="left:360.00px;top:314.40px;font-size:16px;line-height:18.4px;font-family:'Liberation Serif',serif;font-weight:400;color:#000;">In your text:</div>
<div class="a" style="left:360.00px;top:332.70px;font-size:16px;line-height:18.4px;font-family:'Liberation Serif',serif;font-weight:400;color:#000;">1.State your opinion clearly (yes / no / partially).</div>
<div class="a" style="left:360.00px;top:351.00px;font-size:16px;line-height:18.4px;font-family:'Liberation Serif',serif;font-weight:400;color:#000;">2.Bring arguments and relevant examples to support your point of view.</div>
<div class="a" style="left:360px;top:403px;width:722px;height:1px;background:#000"></div>
<div class="a" style="left:360px;top:422px;width:722px;height:1px;background:#000"></div>
<div class="a" style="left:360px;top:441px;width:722px;height:1px;background:#000"></div>
<div class="a" style="left:360px;top:460px;width:722px;height:1px;background:#000"></div>
<div class="a" style="left:360px;top:478px;width:722px;height:1px;background:#000"></div>
<div class="a" style="left:360px;top:497px;width:722px;height:1px;background:#000"></div>
<div class="a" style="left:360px;top:517px;width:722px;height:1px;background:#000"></div>
<div class="a" style="left:360px;top:536px;width:722px;height:1px;background:#000"></div>
<div class="a" style="left:360px;top:555px;width:722px;height:1px;background:#000"></div>
<div class="a" style="left:360px;top:574px;width:722px;height:1px;background:#000"></div>
<div class="a" style="left:360px;top:593px;width:722px;height:1px;background:#000"></div>
<div class="a" style="left:360px;top:611px;width:722px;height:1px;background:#000"></div>
<div class="a" style="left:360px;top:630px;width:722px;height:1px;background:#000"></div>
<div class="a" style="left:360px;top:648px;width:722px;height:1px;background:#000"></div>
<div class="a" style="left:360px;top:666px;width:475px;height:1px;background:#000"></div>
<div class="a" style="left:360px;top:685px;width:722px;height:1px;background:#000"></div>
<svg class="a" style="left:322px;top:261px" width="15" height="14" viewBox="0 0 15 14" fill="none"><rect x="0.5" y="0.5" width="14" height="13" fill="#fff" stroke="#a8a8a8"/><path d="M7.5 2.5v9M3 7h9" stroke="#555" stroke-width="1"/><path d="M7.5 2l-1.6 1.8h3.2zM7.5 12l-1.6-1.8h3.2zM2.5 7l1.8-1.6v3.2zM12.5 7l-1.8-1.6v3.2z" fill="#555"/></svg>
<div class="a" style="left:1348px;top:202px;width:18px;height:515px;background:#f5f5f5"></div>
<svg class="a" style="left:1353px;top:207px" width="10" height="7" viewBox="0 0 10 7" fill="none"><path d="M5 0.8L9.2 6.2H0.8z" fill="#6b6b6b" stroke="#6b6b6b" stroke-linejoin="round"/></svg>
<svg class="a" style="left:1353px;top:704px" width="10" height="7" viewBox="0 0 10 7" fill="none"><path d="M5 6.2L9.2 0.8H0.8z" fill="#6b6b6b" stroke="#6b6b6b" stroke-linejoin="round"/></svg>
<div class="a" style="left:1353px;top:588px;width:9px;height:54px;background:#6f6f6f;border-radius:4.5px"></div>
<div class="a" style="left:0px;top:717px;width:1366px;height:21px;background:#f3f3f3"></div>
<div class="a" style="left:13.00px;top:721.41px;font-size:11.5px;line-height:13.22px;font-family:'Liberation Sans',sans-serif;font-weight:400;color:#333;transform:scaleX(0.9354);transform-origin:0 0;">Page 4 of 4</div>
<div class="a" style="left:89.00px;top:721.41px;font-size:11.5px;line-height:13.22px;font-family:'Liberation Sans',sans-serif;font-weight:400;color:#333;transform:scaleX(0.9580);transform-origin:0 0;">1045 words</div>
<svg class="a" style="left:166px;top:721px" width="15" height="13" viewBox="0 0 15 13" fill="none"><path d="M0.5 0.5h5.5l1 1v11h-6.5z M7 1.5l1-1h5.5v7" stroke="#333" stroke-width="1"/><path d="M8.5 8l5.5 5M14 8l-5.5 5" stroke="#333" stroke-width="1"/></svg>
<div class="a" style="left:199.00px;top:721.41px;font-size:11.5px;line-height:13.22px;font-family:'Liberation Sans',sans-serif;font-weight:400;color:#333;transform:scaleX(0.9694);transform-origin:0 0;">English (United States)</div>
<svg class="a" style="left:333px;top:720px" width="15" height="14" viewBox="0 0 15 14" fill="none"><circle cx="6" cy="2" r="1.6" stroke="#333" stroke-width="1"/><path d="M1 4.5l5 1 5-1M6 5.5v3L3 13M6 8.5l2 2" stroke="#333" stroke-width="1"/><path d="M8.5 10.5l2 2 3.5-5" stroke="#333" stroke-width="1.1"/></svg>
<div class="a" style="left:351.00px;top:721.41px;font-size:11.5px;line-height:13.22px;font-family:'Liberation Sans',sans-serif;font-weight:400;color:#333;">Accessibility: Good to go</div>
<svg class="a" style="left:1006px;top:720px" width="16" height="14" viewBox="0 0 16 14" fill="none"><path d="M0.5 3.5v-3h3M12.5 0.5h3v3M15.5 10.5v3h-3M3.5 13.5h-3v-3" stroke="#333" stroke-width="1"/><path d="M4.5 2.5h4.5l2.5 2.5v6.5h-7z M9 2.5v2.5h2.5" stroke="#333" stroke-width="1"/></svg>
<div class="a" style="left:1024.00px;top:721.41px;font-size:11.5px;line-height:13.22px;font-family:'Liberation Sans',sans-serif;font-weight:400;color:#333;transform:scaleX(0.9265);transform-origin:0 0;">Focus</div>
<svg class="a" style="left:1079px;top:720px" width="13" height="13" viewBox="0 0 13 13" fill="none"><path d="M0.7 0.7H5.3L6.5 1.6 7.7 0.7H12.3V12H7.7L6.5 12.9 5.3 12H0.7Z" stroke="#262626" stroke-width="1.3" stroke-linejoin="round"/><path d="M6.5 1.6V12.5" stroke="#262626" stroke-width="1.2"/><path d="M2.3 3.3H4.8M2.3 5.3H4.8M2.3 7.3H4.8M2.3 9.3H4.8M8.2 3.3H10.7M8.2 5.3H10.7M8.2 7.3H10.7M8.2 9.3H10.7" stroke="#262626" stroke-width="1.1"/></svg>
<div class="a" style="left:1106px;top:717px;width:40px;height:21px;background:#dedede"></div>
<svg class="a" style="left:1120px;top:720px" width="12" height="14" viewBox="0 0 12 14" fill="none"><rect x="0.7" y="0.7" width="10.6" height="12.6" fill="#fff" stroke="#262626" stroke-width="1.3"/><path d="M2.5 2.6h7M2.5 4.6h7M2.5 6.6h7M2.5 8.6h7M2.5 10.6h7" stroke="#262626" stroke-width="1.1"/></svg>
<svg class="a" style="left:1159px;top:720px" width="15" height="14" viewBox="0 0 15 14" fill="none"><path d="M6.5 13H0.7V0.7H12.3V5.5" stroke="#262626" stroke-width="1.3"/><path d="M2.5 2.6h8M2.5 4.6h5M2.5 6.6h3M2.5 8.6h3M2.5 10.6h2" stroke="#262626" stroke-width="1.1"/><circle cx="11" cy="10" r="3.6" fill="#333" stroke="#262626" stroke-width="1"/><path d="M8 10h6M11 7v6" stroke="#f3f3f3" stroke-width="0.9"/></svg>
<div class="a" style="left:1192px;top:726px;width:8px;height:1px;background:#444"></div>
<div class="a" style="left:1205px;top:726px;width:100px;height:1px;background:#777"></div>
<div class="a" style="left:1253px;top:722px;width:5px;height:11px;background:#666"></div>
<svg class="a" style="left:1310px;top:722px" width="8" height="9" viewBox="0 0 8 9" fill="none"><path d="M4 0.5v8M0 4.5h8" stroke="#444" stroke-width="1"/></svg>
<div class="a" style="left:1332.00px;top:721.41px;font-size:11.5px;line-height:13.22px;font-family:'Liberation Sans',sans-serif;font-weight:400;color:#333;transform:scaleX(0.8844);transform-origin:0 0;">100%</div>
<div class="a" style="left:0px;top:738px;width:1366px;height:30px;background:#041923"></div>
<div class="a" style="left:296px;top:738px;width:36px;height:30px;background:#2c3440"></div>
<div class="a" style="left:189px;top:766px;width:28px;height:2px;background:#7fb2e5"></div>
<div class="a" style="left:263px;top:766px;width:28px;height:2px;background:#7fb2e5"></div>
<div class="a" style="left:296px;top:766px;width:36px;height:2px;background:#7fb2e5"></div>
<svg class="a" style="left:10px;top:745px" width="16" height="16" viewBox="0 0 16 16" fill="none"><path d="M0 2.2L6.5 1.3v6.2H0zM7.5 1.1L16 0v7.5H7.5zM0 8.5h6.5v6.2L0 13.8zM7.5 8.5H16V16l-8.5-1.1z" fill="#fff"/></svg>
<svg class="a" style="left:46px;top:745px" width="16" height="16" viewBox="0 0 16 16" fill="none"><circle cx="10" cy="6" r="5" stroke="#fff" stroke-width="1.3"/><path d="M6.5 9.5L1 15" stroke="#fff" stroke-width="1.5"/></svg>
<svg class="a" style="left:82px;top:745px" width="16" height="16" viewBox="0 0 16 16" fill="none"><rect x="1" y="3" width="10" height="10" stroke="#fff" stroke-width="1.3"/><path d="M0 1h12M0 15h12M14 1v2M14 6v4M14 13v2" stroke="#fff" stroke-width="1.3"/></svg>
<svg class="a" style="left:121px;top:745px" width="16" height="16" viewBox="0 0 16 16" fill="none"><circle cx="8" cy="8" r="7.8" fill="#0c7bd6"/><path d="M2 9.5C2 4 8 1.5 12 4.5c2.5 2 2 5-1 5H6.5c0 2.5 3.5 3.5 7.5 2C12 15 8 16 5 14.5 2.8 13.3 2 11.5 2 9.5z" fill="#37c27a"/><path d="M6.5 9.5c0-2 1.5-3 3-3s2.5 1 2.5 3" fill="#0c7bd6"/></svg>
<svg class="a" style="left:157px;top:746px" width="17" height="15" viewBox="0 0 17 15" fill="none"><path d="M0.5 2.5h6l1.5 1.5h8.5v10h-16z" fill="#e8b73a"/><path d="M0.5 5h16v9h-16z" fill="#f8d775"/><rect x="5" y="9" width="7" height="5" fill="#2f7fd6"/></svg>
<svg class="a" style="left:195px;top:745px" width="16" height="16" viewBox="0 0 16 16" fill="none"><circle cx="8" cy="8" r="8" fill="#db4437"/><path d="M8 8L1.1 4A8 8 0 0 1 14.9 4z" fill="#db4437"/><path d="M8 8l6.9-4A8 8 0 0 1 8 16z" fill="#f4c20d"/><path d="M8 8v8A8 8 0 0 1 1.1 4z" fill="#0f9d58"/><circle cx="8" cy="8" r="3.7" fill="#fff"/><circle cx="8" cy="8" r="2.9" fill="#4285f4"/></svg>
<svg class="a" style="left:231px;top:747px" width="17" height="12" viewBox="0 0 17 12" fill="none"><path d="M0 3.5L8.5 0 17 3.5V12H0z" fill="#fff"/><path d="M0.5 3.8L8.5 9l8-5.2" stroke="#041923" stroke-width="1.2"/></svg>
<svg class="a" style="left:268px;top:745px" width="17" height="16" viewBox="0 0 17 16" fill="none"><path d="M1 9C0 4 5 1 9 2.5c3 1 3 4 1 5-1.5.8-1 2.5.5 3.5C8 15 2 14 1 9z" fill="#e9e2d0"/><circle cx="4" cy="6" r="1.3" fill="#d9423a"/><circle cx="7" cy="4.5" r="1.3" fill="#3b8ed8"/><circle cx="4" cy="10" r="1.3" fill="#49a84a"/><path d="M15 0.5l1 1-4 7-1.5-1z" fill="#c9762a"/><path d="M10.5 7.5l1.5 1-1 6-2-1z" fill="#8a5a2a"/></svg>
<svg class="a" style="left:305px;top:745px" width="16" height="16" viewBox="0 0 16 16" fill="none"><defs><clipPath id="wc2"><rect x="2.2" y="0.1" width="12.6" height="15.6" rx="1.6"/></clipPath></defs><g clip-path="url(#wc2)"><rect x="2" y="0" width="13" height="5.3" fill="#39c6f3"/><rect x="2" y="5.3" width="13" height="5.3" fill="#1c8fe0"/><rect x="2" y="10.6" width="13" height="5.4" fill="#1251c6"/></g><rect x="0" y="5" width="8.9" height="8.6" rx="1.3" fill="#1c37a3"/><path d="M1.6 7l1.3 5h0.9l0.9-3.3 0.9 3.3h0.9L7.8 7H6.8L6.1 10.3 5.2 7h-0.8L3.5 10.3 2.8 7z" fill="#fff"/></svg>
<svg class="a" style="left:1102px;top:749px" width="12" height="7" viewBox="0 0 12 7" fill="none"><path d="M0.8 6.3L6 1l5.2 5.3" stroke="#fff" stroke-width="1.2"/></svg>
<svg class="a" style="left:1126px;top:745px" width="13" height="15" viewBox="0 0 13 15" fill="none"><path d="M3 1.5c1.5-1 5-1 6.5 0M3 13.5c1.5 1 5 1 6.5 0" stroke="#fff" stroke-width="1"/><rect x="1" y="4.5" width="7.5" height="6" rx="1" stroke="#fff" stroke-width="1.1"/><path d="M8.5 6.5l3.5-2v6l-3.5-2" stroke="#fff" stroke-width="1.1"/></svg>
<svg class="a" style="left:1148px;top:749px" width="16" height="9" viewBox="0 0 16 9" fill="none"><rect x="0.6" y="0.6" width="13" height="7.8" stroke="#fff" stroke-width="1.2"/><rect x="2.5" y="2.5" width="5.5" height="4" fill="#fff"/><rect x="14" y="3" width="1.8" height="3" fill="#fff"/></svg>
<svg class="a" style="left:1175px;top:747px" width="13" height="13" viewBox="0 0 13 13" fill="none"><path d="M1 12A11 11 0 0 1 12 1M3.5 12A8.5 8.5 0 0 1 12 3.5M6 12A6 6 0 0 1 12 6M8.5 12A3.5 3.5 0 0 1 12 8.5" stroke="#fff" stroke-width="1"/><circle cx="11" cy="11" r="1.5" fill="#fff"/></svg>
<svg class="a" style="left:1196px;top:746px" width="17" height="14" viewBox="0 0 17 14" fill="none"><path d="M0.6 4.5h3L8 0.8v12.4L3.6 9.5h-3z" stroke="#fff" stroke-width="1.1"/><path d="M10 4.5c1 1.5 1 3.5 0 5M12.3 2.8c1.8 2.5 1.8 6 0 8.5M14.6 1c2.6 3.5 2.6 8.5 0 12" stroke="#fff" stroke-width="1.1"/></svg>
<div class="a" style="left:1222.00px;top:746.94px;font-size:12px;line-height:13.8px;font-family:'Liberation Sans',sans-serif;font-weight:400;color:#fff;transform:scaleX(0.8846);transform-origin:0 0;">ENG</div>
<div class="a" style="left:1259.00px;top:746.94px;font-size:12px;line-height:13.8px;font-family:'Liberation Sans',sans-serif;font-weight:400;color:#fff;transform:scaleX(0.9144);transform-origin:0 0;">10:09 PM</div>
<svg class="a" style="left:1325px;top:745px" width="16" height="16" viewBox="0 0 16 16" fill="none"><path d="M0.6 0.6h14.8v11.8H9.5L7.5 15l-2-2.6H0.6z" stroke="#fff" stroke-width="1.1" stroke-linejoin="round"/></svg>
<div class="a" style="left:1361px;top:738px;width:1px;height:30px;background:#5a6270"></div>
</body></html>
